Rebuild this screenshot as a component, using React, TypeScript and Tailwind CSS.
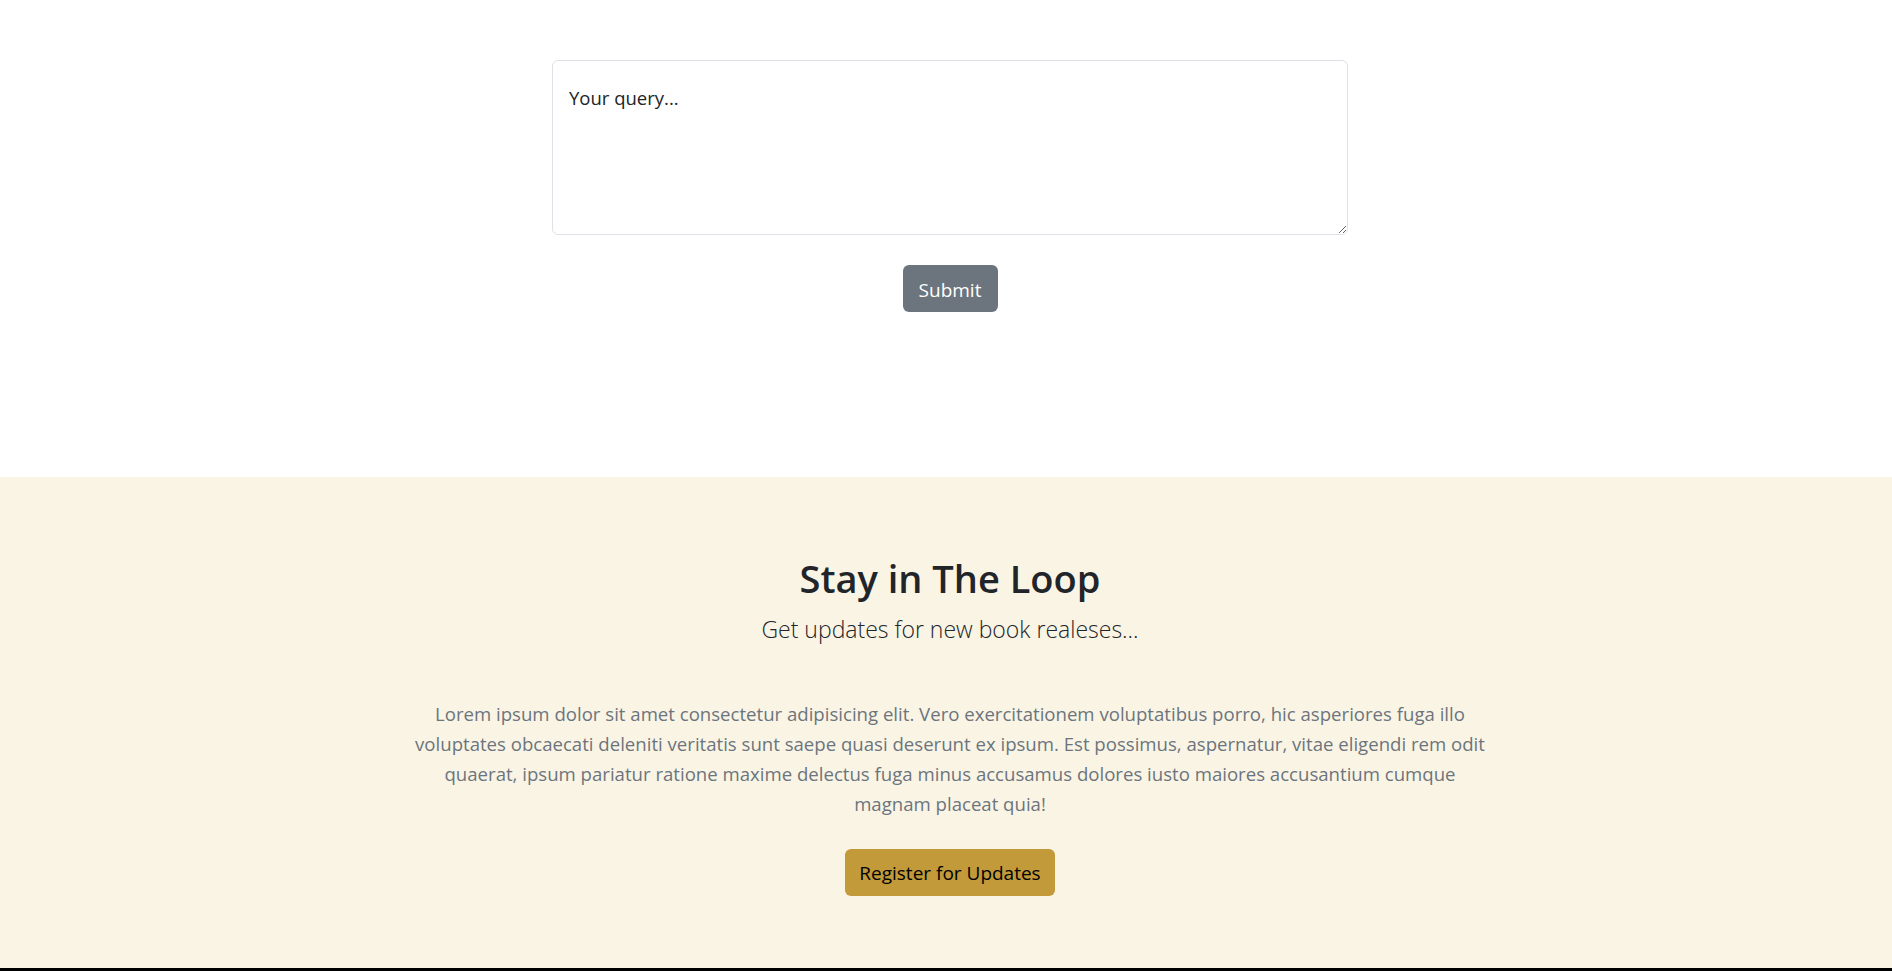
import React from "react";

export default function App() {
  const font = { fontFamily: '"Open Sans", "Noto Sans", sans-serif' };
  return (
    <div className="min-h-[971px] bg-white" style={font}>
      <section className="h-[477px] bg-white pl-2">
        <div className="mx-auto flex w-[796px] flex-col items-center pt-[60px]">
          <textarea
            placeholder="Your query..."
            className="h-[175px] w-[796px] resize-y rounded-[6px] border border-[#dee2e6] bg-white px-4 pt-[22px] text-[18.5px] leading-[30px] text-[#212529] placeholder:text-[#212529] focus:outline-none"
          />
          <button className="mt-[30px] h-[47px] w-[95px] rounded-[6px] bg-[#6c757d] pt-[3px] text-[19px] text-white">
            Submit
          </button>
        </div>
      </section>
      <section className="flex h-[491px] flex-col items-center bg-[#faf4e5] pl-2 pt-[77px] text-center">
        <h2 className="text-[38px] font-semibold leading-[48px] text-[#212529]">Stay in The Loop</h2>
        <p className="mt-[10px] text-[23px] font-light leading-[34px] text-[#212529]">
          Get updates for new book realeses...
        </p>
        <p className="mt-[53px] w-[1100px] text-[18.6px] leading-[30px] text-[#6c757d]">
          Lorem ipsum dolor sit amet consectetur adipisicing elit. Vero exercitationem voluptatibus porro, hic asperiores fuga illo
          <br />
          voluptates obcaecati deleniti veritatis sunt saepe quasi deserunt ex ipsum. Est possimus, aspernatur, vitae eligendi rem odit
          <br />
          quaerat, ipsum pariatur ratione maxime delectus fuga minus accusamus dolores iusto maiores accusantium cumque
          <br />
          magnam placeat quia!
        </p>
        <button className="mt-[30px] h-[47px] w-[210px] rounded-[6px] bg-[#c29a3a] pt-[2px] text-[19px] text-black">
          Register for Updates
        </button>
      </section>
      <div className="h-[3px] bg-black" />
    </div>
  );
}
